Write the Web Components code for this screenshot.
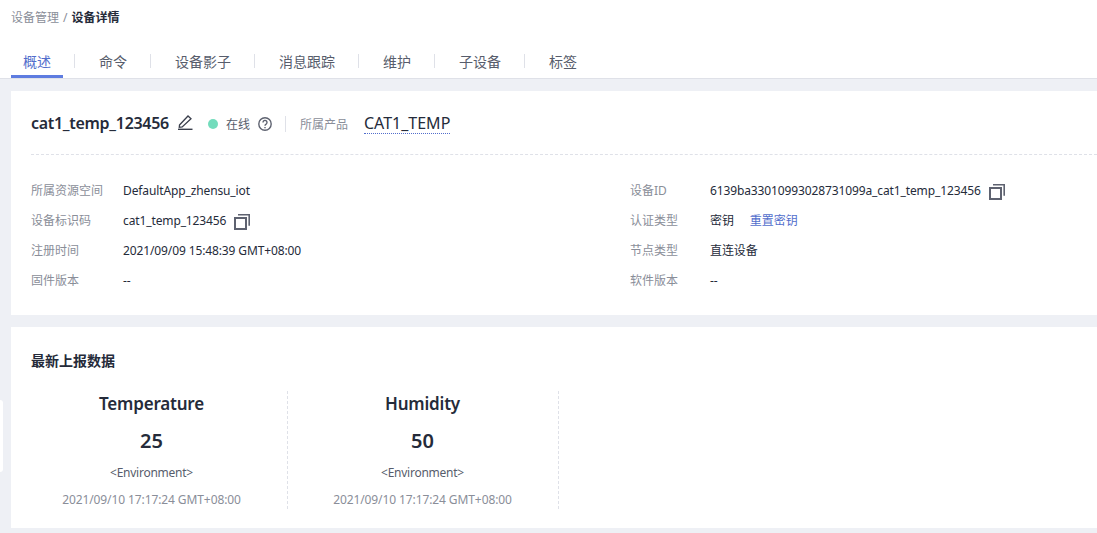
<!DOCTYPE html>
<html lang="zh">
<head>
<meta charset="UTF-8">
<title>设备详情</title>
<style>
  html, body { margin: 0; height: 533px; overflow: hidden; }
  body {
    background: #eef0f5;
    color: #252b3a;
    font-family: "Noto Sans", "Noto Sans CJK SC", sans-serif;
    font-size: 12px;
  }
</style>
</head>
<body>
<page-header></page-header>
<device-card></device-card>
<latest-data></latest-data>
<side-tab></side-tab>

<script>
  const COPY_ICON = `<svg style="margin-top:4px" width="16" height="16" viewBox="0 0 16 16" fill="none" stroke="#5e6270" stroke-width="2"><rect x="1" y="4" width="11" height="11"/><path d="M4 .8h11.2v11" stroke-width="1.6"/></svg>`;

  class PageHeader extends HTMLElement {
    constructor() {
      super();
      const tabs = ['概述', '命令', '设备影子', '消息跟踪', '维护', '子设备', '标签'];
      const shadow = this.attachShadow({ mode: 'open' });
      shadow.innerHTML = `
        <style>
          :host { display: block; background: #fff; height: 78px; border-bottom: 1px solid #dfe1e8; padding-left: 11px; }
          .crumb { height: 48px; padding-top: 9px; box-sizing: border-box; line-height: 17px; color: #8a8e99; }
          .crumb i { font-style: normal; margin: 0 4px; }
          .crumb b { color: #252b3a; font-weight: 700; }
          nav { display: flex; height: 30px; }
          a { position: relative; display: block; padding: 0 12px; height: 30px; box-sizing: border-box; line-height: 27px; font-size: 14px; color: #575d6c; margin-right: 24px; }
          a + a::before { content: ""; position: absolute; left: -13px; top: 6px; height: 14px; width: 1px; background: #dfe1e8; }
          a.on { color: #526ecc; border-bottom: 3px solid #5e7ce0; }
        </style>
        <div class="crumb">设备管理<i>/</i><b>设备详情</b></div>
        <nav>${tabs.map((t, i) => `<a class="${i ? '' : 'on'}">${t}</a>`).join('')}</nav>`;
    }
  }
  customElements.define('page-header', PageHeader);

  class InfoRow extends HTMLElement {
    constructor() {
      super();
      const shadow = this.attachShadow({ mode: 'open' });
      shadow.innerHTML = `
        <style>
          :host { display: flex; align-items: center; height: 30px; }
          .k { color: #8a8e99; width: var(--label-width, 92px); flex: none; }
          .v { display: flex; align-items: center; gap: 8px; color: #252b3a; white-space: nowrap; letter-spacing: -.12px; }
        </style>
        <span class="k">${this.getAttribute('label')}</span>
        <span class="v"><slot></slot></span>`;
    }
  }
  customElements.define('info-row', InfoRow);

  class DeviceCard extends HTMLElement {
    constructor() {
      super();
      const shadow = this.attachShadow({ mode: 'open' });
      shadow.innerHTML = `
        <style>
          :host { display: block; background: #fff; margin: 12px 0 12px 11px; height: 224px; padding: 0 0 0 20px; box-sizing: border-box; }
          .head { display: flex; align-items: center; height: 63px; border-bottom: 1px dashed #dfe1e8; }
          h2 { margin: 0; font-size: 16px; font-weight: 600; color: #252b3a; letter-spacing: -.3px; }
          .pen { margin-left: 8px; margin-top: -2px; }
          .dot { width: 10px; height: 10px; border-radius: 50%; background: #73dcbc; margin: 2px 0 0 15px; }
          .st { margin: 2px 0 0 8px; color: #575d6c; }
          .help { margin: 2px 0 0 8px; }
          .sep { width: 1px; height: 16px; background: #dfe1e8; margin: 2px 14px 0 13px; }
          .pl { color: #8a8e99; margin-top: 2px; }
          .prod { margin: 2px 0 0 16px; font-size: 16px; color: #252b3a; border-bottom: 1px dotted #526ecc; line-height: 19px; }
          .grid { display: grid; grid-template-columns: 599px 1fr; padding-top: 20px; }
          .grid > div:last-child { --label-width: 80px; }
          a { color: #526ecc; margin-left: 8px; letter-spacing: 0; }
        </style>
        <div class="head">
          <h2>cat1_temp_123456</h2>
          <svg class="pen" width="16" height="16" viewBox="0 0 16 16" fill="none" stroke="#3a3f4c" stroke-width="1.3"><path d="M2.5 11 L11 2 L14 4.8 L5.2 13 L2.3 13.3 Z"/><path d="M1 15.3 H15.5" stroke-width="1.4"/></svg>
          <span class="dot"></span>
          <span class="st">在线</span>
          <svg class="help" width="14" height="14" viewBox="0 0 14 14" fill="none" stroke="#5e6270" stroke-width="1.4"><circle cx="7" cy="7" r="6.2"/><path d="M5 5.4a2 2 0 1 1 3.1 1.7c-.8.5-1.1.9-1.1 1.7"/><path d="M7 10v1.2"/></svg>
          <span class="sep"></span>
          <span class="pl">所属产品</span>
          <span class="prod">CAT1_TEMP</span>
        </div>
        <div class="grid">
          <div>
            <info-row label="所属资源空间">DefaultApp_zhensu_iot</info-row>
            <info-row label="设备标识码">cat1_temp_123456 ${COPY_ICON}</info-row>
            <info-row label="注册时间">2021/09/09 15:48:39 GMT+08:00</info-row>
            <info-row label="固件版本">--</info-row>
          </div>
          <div>
            <info-row label="设备ID">6139ba33010993028731099a_cat1_temp_123456 ${COPY_ICON}</info-row>
            <info-row label="认证类型">密钥 <a>重置密钥</a></info-row>
            <info-row label="节点类型">直连设备</info-row>
            <info-row label="软件版本">--</info-row>
          </div>
        </div>`;
    }
  }
  customElements.define('device-card', DeviceCard);

  class DataTile extends HTMLElement {
    constructor() {
      super();
      const shadow = this.attachShadow({ mode: 'open' });
      shadow.innerHTML = `
        <style>
          :host { display: block; width: 271px; height: 118px; box-sizing: border-box; border-right: 1px dashed #dfe1e8; padding-right: 1px; text-align: center; }
          .n { font-size: 17px; font-weight: 600; line-height: 26px; color: #252b3a; letter-spacing: -.2px; }
          .v { font-size: 20px; font-weight: 600; line-height: 28px; margin-top: 10px; color: #252b3a; }
          .s { line-height: 16px; margin-top: 10px; color: #575d6c; letter-spacing: -.25px; }
          .t { line-height: 16px; margin-top: 11px; color: #8a8e99; letter-spacing: -.1px; }
        </style>
        <div class="n">${this.getAttribute('name')}</div>
        <div class="v">${this.getAttribute('value')}</div>
        <div class="s">&lt;Environment&gt;</div>
        <div class="t">2021/09/10 17:17:24 GMT+08:00</div>`;
    }
  }
  customElements.define('data-tile', DataTile);

  class LatestData extends HTMLElement {
    constructor() {
      super();
      const shadow = this.attachShadow({ mode: 'open' });
      shadow.innerHTML = `
        <style>
          :host { display: block; background: #fff; margin-left: 11px; height: 201px; padding: 25px 0 0 20px; box-sizing: border-box; }
          h3 { margin: 0 0 21px; font-size: 14px; line-height: 18px; font-weight: 700; color: #252b3a; }
          .row { display: flex; margin-left: -14px; }
        </style>
        <h3>最新上报数据</h3>
        <div class="row">
          <data-tile name="Temperature" value="25"></data-tile>
          <data-tile name="Humidity" value="50"></data-tile>
        </div>`;
    }
  }
  customElements.define('latest-data', LatestData);

  // small white handle poking out of the left edge
  class SideTab extends HTMLElement {
    constructor() {
      super();
      const shadow = this.attachShadow({ mode: 'open' });
      shadow.innerHTML = `<style>:host { position: absolute; left: 0; top: 400px; width: 3px; height: 72px; background: #fff; border-radius: 0 4px 4px 0; }</style>`;
    }
  }
  customElements.define('side-tab', SideTab);
</script>
</body>
</html>
